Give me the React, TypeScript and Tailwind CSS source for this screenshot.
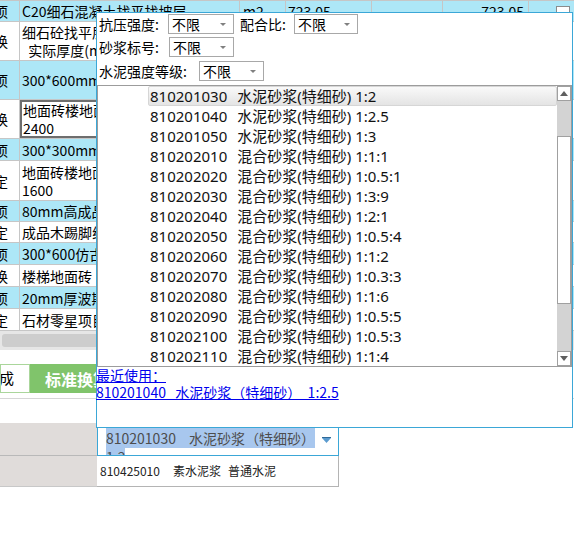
import React from "react";

type Row = {
  h: string;
  blue?: boolean;
  sel?: boolean;
  tag: string;
  lines: string[];
};

const rows: Row[] = [
  { h: "h-[21px]", blue: true, tag: "项", lines: ["C20细石混凝土找平找坡层"] },
  { h: "h-[39px]", tag: "换", lines: ["细石砼找平层 30mm", "  实际厚度(mm):40"] },
  { h: "h-[39px]", blue: true, tag: "项", lines: ["300*600mm仿古砖地面"] },
  { h: "h-[39px]", tag: "换", sel: true, lines: ["地面砖楼地面 周长", "2400"] },
  { h: "h-[22px]", blue: true, tag: "项", lines: ["300*300mm防滑地砖"] },
  { h: "h-[40px]", tag: "定", lines: ["地面砖楼地面 周长", "1600"] },
  { h: "h-[21px]", blue: true, tag: "项", lines: ["80mm高成品木踢脚线"] },
  { h: "h-[21px]", tag: "定", lines: ["成品木踢脚线"] },
  { h: "h-[22px]", blue: true, tag: "项", lines: ["300*600仿古砖楼梯"] },
  { h: "h-[22px]", tag: "换", lines: ["楼梯地面砖"] },
  { h: "h-[22px]", blue: true, tag: "项", lines: ["20mm厚波斯灰大理石"] },
  { h: "h-[22px]", tag: "定", lines: ["石材零星项目"] },
];

const mortars: [string, string][] = [
  ["810201030", "水泥砂浆(特细砂) 1:2"],
  ["810201040", "水泥砂浆(特细砂) 1:2.5"],
  ["810201050", "水泥砂浆(特细砂) 1:3"],
  ["810202010", "混合砂浆(特细砂) 1:1:1"],
  ["810202020", "混合砂浆(特细砂) 1:0.5:1"],
  ["810202030", "混合砂浆(特细砂) 1:3:9"],
  ["810202040", "混合砂浆(特细砂) 1:2:1"],
  ["810202050", "混合砂浆(特细砂) 1:0.5:4"],
  ["810202060", "混合砂浆(特细砂) 1:1:2"],
  ["810202070", "混合砂浆(特细砂) 1:0.3:3"],
  ["810202080", "混合砂浆(特细砂) 1:1:6"],
  ["810202090", "混合砂浆(特细砂) 1:0.5:5"],
  ["810202100", "混合砂浆(特细砂) 1:0.5:3"],
  ["810202110", "混合砂浆(特细砂) 1:1:4"],
];

function TableRow({ r, first }: { r: Row; first?: boolean }) {
  const bg = r.blue ? "bg-[#ade7f7]" : "bg-white";
  return (
    <div className={`flex ${r.h} ${bg} border-b border-[#c6c6c6]`}>
      <div className="w-[20px] shrink-0 overflow-hidden border-r border-[#c6c6c6] flex items-center">
        <span className="ml-[-6px] leading-none">{r.tag}</span>
      </div>
      <div
        className={`w-[220px] shrink-0 border-r border-[#c6c6c6] pl-[2px] overflow-hidden whitespace-pre leading-[18px] flex flex-col justify-center ${
          r.sel ? "shadow-[inset_0_0_0_2px_#6e6e6e] pl-[3px]" : ""
        }`}
      >
        {/* only the first row shows past the popup's left edge */}
        <div className={first ? "" : "w-[74px] overflow-hidden"}>
          {r.lines.map((l) => (
            <div key={l}>{l}</div>
          ))}
        </div>
      </div>
      <div className="w-[46px] shrink-0 border-r border-[#c6c6c6] pl-[3px] flex items-center">{first ? "m2" : ""}</div>
      <div className="w-[86px] shrink-0 border-r border-[#c6c6c6] pl-[2px] flex items-center">{first ? "723.05" : ""}</div>
      <div className="w-[71px] shrink-0 border-r border-[#c6c6c6]" />
      <div className="w-[86px] shrink-0 border-r border-[#c6c6c6] pr-[4px] flex items-center justify-end">{first ? "723.05" : ""}</div>
      <div className="w-[45px] shrink-0 flex items-start justify-end pr-[4px] pt-[5px]">
        {first && <div className="w-[14px] h-[14px] border border-[#8c8c8c] bg-white" />}
      </div>
    </div>
  );
}

function Sel({ w }: { w: string }) {
  return (
    <div className={`${w} h-[20px] border border-[#a8a8a8] bg-white flex items-center justify-between pl-[3px] pr-[7px]`}>
      <span className="leading-none">不限</span>
      <span className="w-0 h-0 border-x-[3px] border-x-transparent border-t-[3px] border-t-[#808080]" />
    </div>
  );
}

function ScrollBtn({ up }: { up?: boolean }) {
  return (
    <div className="h-[15px] border border-[#a0a0a0] bg-white flex items-center justify-center">
      <span
        className={
          up
            ? "w-0 h-0 border-x-[4px] border-x-transparent border-b-[5px] border-b-[#5f5f5f]"
            : "w-0 h-0 border-x-[4px] border-x-transparent border-t-[5px] border-t-[#5f5f5f]"
        }
      />
    </div>
  );
}

function Popup() {
  return (
    <div className="absolute left-[96px] top-[12px] w-[477px] h-[416px] border border-[#3ba7d7] bg-white flex flex-col z-10">
      <div className="pl-[2px] text-[14px]">
        <div className="mt-[1px] flex h-[20px] items-center">
          <span className="w-[69px]">抗压强度:</span>
          <Sel w="w-[66px]" />
          <span className="ml-[6px] w-[54px]">配合比:</span>
          <Sel w="w-[64px]" />
        </div>
        <div className="mt-[3px] flex h-[20px] items-center">
          <span className="w-[70px]">砂浆标号:</span>
          <Sel w="w-[65px]" />
        </div>
        <div className="mt-[4px] flex h-[20px] items-center">
          <span className="w-[100px]">水泥强度等级:</span>
          <Sel w="w-[65px]" />
        </div>
      </div>
      <div className="mt-[4px] h-[282px] border border-[#9c9c9c] flex">
        <div className="flex-1 pl-[50px] font-['Noto_Sans','Noto_Sans_CJK_SC',sans-serif] text-[15px] text-[#111]">
          {mortars.map(([code, name], i) => (
            <div
              key={code}
              className={`h-[20px] flex items-center pl-[1px] whitespace-pre border rounded-[2px] ${
                i === 0
                  ? "border-[#d6d6d6] bg-gradient-to-b from-[#f9f9f9] to-[#e4e4e4]"
                  : "border-transparent"
              }`}
            >
              <span>{code}</span>
              <span className="ml-[10px]">{name}</span>
            </div>
          ))}
        </div>
        <div className="w-[14px] flex flex-col">
          <ScrollBtn up />
          <div className="h-[35px] bg-[#d3d3d3]" />
          <div className="h-[168px] border border-[#a0a0a0] bg-white" />
          <div className="flex-1 bg-[#d3d3d3]" />
          <ScrollBtn />
        </div>
      </div>
      <div className="ml-[-1px] text-[14px] leading-[17px] text-[#0000ee]">
        <div>
          <span className="underline">最近使用：</span>
        </div>
        <div>
          <span className="underline whitespace-pre">{"810201040\u00a0\u00a0\u00a0水泥砂浆（特细砂）\u00a0\u00a01:2.5"}</span>
        </div>
      </div>
    </div>
  );
}

export default function App() {
  return (
    <div className="relative w-[574px] h-[537px] overflow-hidden bg-white text-black text-[14px] font-['Noto_Sans_CJK_SC','Noto_Sans',sans-serif]">
      <div className="border-t border-[#c6c6c6]">
        {rows.map((r, i) => (
          <TableRow key={i} r={r} first={i === 0} />
        ))}
      </div>
      <div className="h-[19px] bg-[#e6e6e6] pt-[3px] pl-[2px]">
        <div className="h-[13px] w-[500px] rounded-[3px] bg-[#cdcdcd]" />
      </div>
      <div className="h-[14px]" />
      <div className="h-[29px] flex">
        <div className="w-[30px] border border-[#aad69b] bg-white overflow-hidden flex items-center text-[15px]">
          <span className="ml-[-2px]">成</span>
        </div>
        <div className="w-[110px] bg-[#80c46b] flex items-center pl-[15px] text-[16px] font-bold text-white">
          标准换算
        </div>
      </div>
      <div className="h-[6px] border-b border-[#d6d6d6]" />
      <div className="h-[24px]" />
      <div className="flex">
        <div className="w-[97px] bg-[#e0dcda] flex flex-col">
          <div className="h-[33px] border-b border-[#b9b9b9]" />
          <div className="h-[31px] border-b border-[#c8c8c8]" />
        </div>
        <div className="w-[242px] flex flex-col">
          <div className="h-[33px] border border-[#3ba7d7] relative overflow-hidden pt-[5px] pl-[8px] leading-[19px] text-[#4d4d4d]">
            <span className="bg-[#a8c7ee] whitespace-pre">
              810201030
              <span className="inline-block w-[13px]" />
              水泥砂浆（特细砂）
              <br />
              1:2
            </span>
            <svg className="absolute right-[7px] top-[13px]" width="9" height="6" viewBox="0 0 9 6">
              <rect x="0" y="0" width="9" height="1" fill="#2f6a99" />
              <path d="M0 1 L9 1 L4.5 6 Z" fill="#5b9bcf" />
            </svg>
          </div>
          <div className="h-[31px] border-r border-b border-[#b4b4b4] flex items-center pl-[3px] text-[12px] text-[#222] whitespace-pre">
            <span>810425010</span>
            <span className="ml-[13px]">素水泥浆</span>
            <span className="ml-[7px]">普通水泥</span>
          </div>
        </div>
      </div>
      <Popup />
    </div>
  );
}
